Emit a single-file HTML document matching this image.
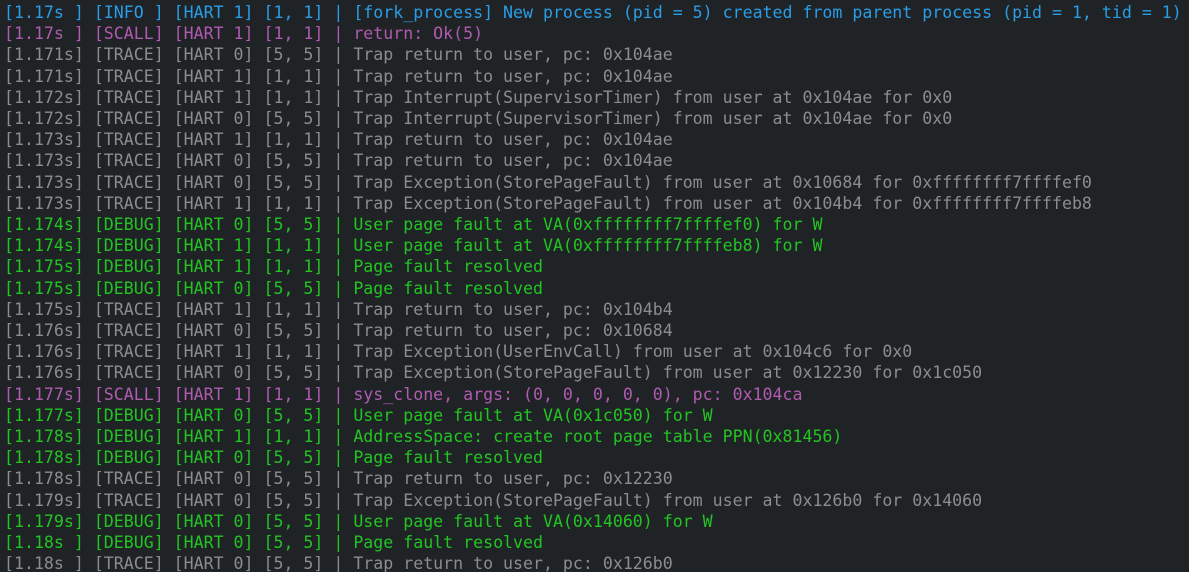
<!DOCTYPE html>
<html><head><meta charset="utf-8"><style>
html,body{margin:0;padding:0;background:#1f2326;width:1189px;height:572px;overflow:hidden}
pre{margin:0;padding:2px 0 0 4px;font-family:"DejaVu Sans Mono","Liberation Mono",monospace;font-size:16.58px;line-height:21.2px;color:#8c8c8c;white-space:pre}
.i{color:#2a9de6}.s{color:#b05ab0}.d{color:#22c422}.t{color:#8c8c8c}
</style></head><body><pre><span class="i">[1.17s ] [INFO ] [HART 1] [1, 1] | [fork_process] New process (pid = 5) created from parent process (pid = 1, tid = 1)</span>
<span class="s">[1.17s ] [SCALL] [HART 1] [1, 1] | return: Ok(5)</span>
<span class="t">[1.171s] [TRACE] [HART 0] [5, 5] | Trap return to user, pc: 0x104ae</span>
<span class="t">[1.171s] [TRACE] [HART 1] [1, 1] | Trap return to user, pc: 0x104ae</span>
<span class="t">[1.172s] [TRACE] [HART 1] [1, 1] | Trap Interrupt(SupervisorTimer) from user at 0x104ae for 0x0</span>
<span class="t">[1.172s] [TRACE] [HART 0] [5, 5] | Trap Interrupt(SupervisorTimer) from user at 0x104ae for 0x0</span>
<span class="t">[1.173s] [TRACE] [HART 1] [1, 1] | Trap return to user, pc: 0x104ae</span>
<span class="t">[1.173s] [TRACE] [HART 0] [5, 5] | Trap return to user, pc: 0x104ae</span>
<span class="t">[1.173s] [TRACE] [HART 0] [5, 5] | Trap Exception(StorePageFault) from user at 0x10684 for 0xffffffff7ffffef0</span>
<span class="t">[1.173s] [TRACE] [HART 1] [1, 1] | Trap Exception(StorePageFault) from user at 0x104b4 for 0xffffffff7ffffeb8</span>
<span class="d">[1.174s] [DEBUG] [HART 0] [5, 5] | User page fault at VA(0xffffffff7ffffef0) for W</span>
<span class="d">[1.174s] [DEBUG] [HART 1] [1, 1] | User page fault at VA(0xffffffff7ffffeb8) for W</span>
<span class="d">[1.175s] [DEBUG] [HART 1] [1, 1] | Page fault resolved</span>
<span class="d">[1.175s] [DEBUG] [HART 0] [5, 5] | Page fault resolved</span>
<span class="t">[1.175s] [TRACE] [HART 1] [1, 1] | Trap return to user, pc: 0x104b4</span>
<span class="t">[1.176s] [TRACE] [HART 0] [5, 5] | Trap return to user, pc: 0x10684</span>
<span class="t">[1.176s] [TRACE] [HART 1] [1, 1] | Trap Exception(UserEnvCall) from user at 0x104c6 for 0x0</span>
<span class="t">[1.176s] [TRACE] [HART 0] [5, 5] | Trap Exception(StorePageFault) from user at 0x12230 for 0x1c050</span>
<span class="s">[1.177s] [SCALL] [HART 1] [1, 1] | sys_clone, args: (0, 0, 0, 0, 0), pc: 0x104ca</span>
<span class="d">[1.177s] [DEBUG] [HART 0] [5, 5] | User page fault at VA(0x1c050) for W</span>
<span class="d">[1.178s] [DEBUG] [HART 1] [1, 1] | AddressSpace: create root page table PPN(0x81456)</span>
<span class="d">[1.178s] [DEBUG] [HART 0] [5, 5] | Page fault resolved</span>
<span class="t">[1.178s] [TRACE] [HART 0] [5, 5] | Trap return to user, pc: 0x12230</span>
<span class="t">[1.179s] [TRACE] [HART 0] [5, 5] | Trap Exception(StorePageFault) from user at 0x126b0 for 0x14060</span>
<span class="d">[1.179s] [DEBUG] [HART 0] [5, 5] | User page fault at VA(0x14060) for W</span>
<span class="d">[1.18s ] [DEBUG] [HART 0] [5, 5] | Page fault resolved</span>
<span class="t">[1.18s ] [TRACE] [HART 0] [5, 5] | Trap return to user, pc: 0x126b0</span></pre></body></html>
